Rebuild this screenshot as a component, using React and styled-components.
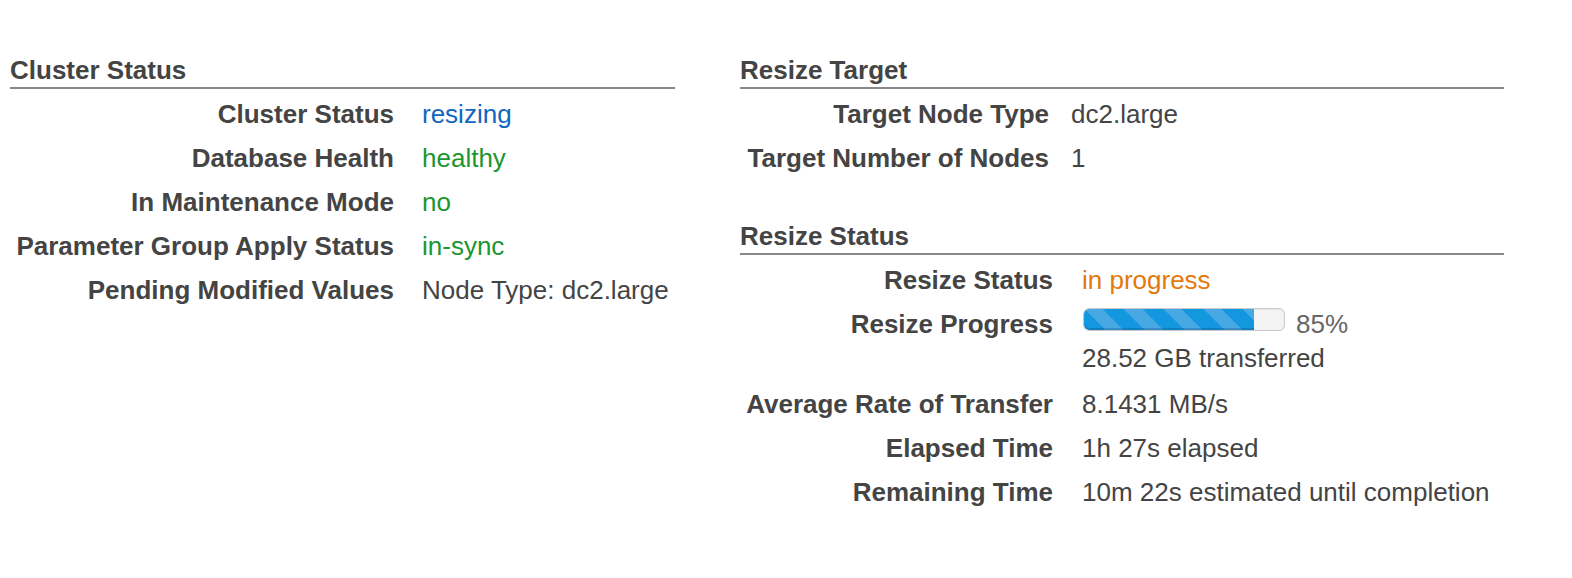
import React from 'react';
import styled, { createGlobalStyle } from 'styled-components';

const GlobalStyle = createGlobalStyle`
  html, body {
    margin: 0;
    padding: 0;
    background: #ffffff;
  }
  body {
    font-family: "Liberation Sans", Arial, Helvetica, sans-serif;
    color: #444444;
  }
`;

const Page = styled.div`
  display: flex;
  align-items: flex-start;
  gap: 65px;
  padding: 55px 0 0 10px;
  width: 1572px;
  height: 578px;
  box-sizing: border-box;
`;

const Column = styled.div`
  display: flex;
  flex-direction: column;
  width: ${(p) => p.$width}px;
`;

const Heading = styled.h2`
  margin: ${(p) => (p.$first ? '0' : '41px')} 0 0;
  padding-bottom: 2px;
  border-bottom: 2px solid #888888;
  font-size: 26px;
  line-height: 30px;
  font-weight: 700;
  color: #444444;
`;

const Rows = styled.div`
  display: flex;
  flex-direction: column;
  margin-top: 3px;
`;

const Row = styled.div`
  display: grid;
  grid-template-columns: ${(p) => p.$labelWidth}px 1fr;
  column-gap: ${(p) => p.$gap}px;
  font-size: 26px;
  line-height: 44px;
`;

const Label = styled.div`
  text-align: right;
  font-weight: 700;
  color: #444444;
  white-space: nowrap;
`;

const tones = {
  plain: '#444444',
  blue: '#1166c0',
  green: '#1c962e',
  orange: '#e4780c',
};

const Value = styled.div`
  color: ${(p) => tones[p.$tone || 'plain']};
  white-space: nowrap;
`;

const ProgressLine = styled.div`
  display: flex;
  align-items: flex-start;
`;

const Track = styled.div`
  width: 200px;
  height: 21px;
  margin: 6px 0 0 1px;
  border: 1px solid #c9c9c9;
  border-radius: 6px;
  background: #f4f4f4;
  box-shadow: inset 0 1px 2px rgba(0, 0, 0, 0.06);
  overflow: hidden;
`;

const Fill = styled.div`
  height: 100%;
  border-radius: 5px 0 0 5px;
  background-color: #1599df;
  background-image: repeating-linear-gradient(
    45deg,
    #1397de 0,
    #1397de 15px,
    #48a8e4 15px,
    #48a8e4 28px
  );
  box-shadow: inset 0 -2px 0 rgba(0, 60, 110, 0.25);
`;

const Percent = styled.span`
  margin-left: 11px;
  color: #666666;
`;

const SubLine = styled.div`
  line-height: 24px;
  margin-bottom: 12px;
`;

const left = [
  { label: 'Cluster Status', value: 'resizing', tone: 'blue' },
  { label: 'Database Health', value: 'healthy', tone: 'green' },
  { label: 'In Maintenance Mode', value: 'no', tone: 'green' },
  { label: 'Parameter Group Apply Status', value: 'in-sync', tone: 'green' },
  { label: 'Pending Modified Values', value: 'Node Type: dc2.large' },
];

const target = [
  { label: 'Target Node Type', value: 'dc2.large' },
  { label: 'Target Number of Nodes', value: '1' },
];

const after = [
  { label: 'Average Rate of Transfer', value: '8.1431 MB/s' },
  { label: 'Elapsed Time', value: '1h 27s elapsed' },
  { label: 'Remaining Time', value: '10m 22s estimated until completion' },
];

const progress = 85;

export default function App() {
  return (
    <>
      <GlobalStyle />
      <Page>
        <Column $width={665}>
          <Heading $first>Cluster Status</Heading>
          <Rows>
            {left.map((r) => (
              <Row key={r.label} $labelWidth={384} $gap={28}>
                <Label>{r.label}</Label>
                <Value $tone={r.tone}>{r.value}</Value>
              </Row>
            ))}
          </Rows>
        </Column>

        <Column $width={764}>
          <Heading $first>Resize Target</Heading>
          <Rows>
            {target.map((r) => (
              <Row key={r.label} $labelWidth={309} $gap={22}>
                <Label>{r.label}</Label>
                <Value>{r.value}</Value>
              </Row>
            ))}
          </Rows>

          <Heading>Resize Status</Heading>
          <Rows>
            <Row $labelWidth={313} $gap={29}>
              <Label>Resize Status</Label>
              <Value $tone="orange">in progress</Value>
            </Row>
            <Row $labelWidth={313} $gap={29}>
              <Label>Resize Progress</Label>
              <Value>
                <ProgressLine>
                  <Track>
                    <Fill style={{ width: `${progress}%` }} />
                  </Track>
                  <Percent>{progress}%</Percent>
                </ProgressLine>
                <SubLine>28.52 GB transferred</SubLine>
              </Value>
            </Row>
            {after.map((r) => (
              <Row key={r.label} $labelWidth={313} $gap={29}>
                <Label>{r.label}</Label>
                <Value>{r.value}</Value>
              </Row>
            ))}
          </Rows>
        </Column>
      </Page>
    </>
  );
}
